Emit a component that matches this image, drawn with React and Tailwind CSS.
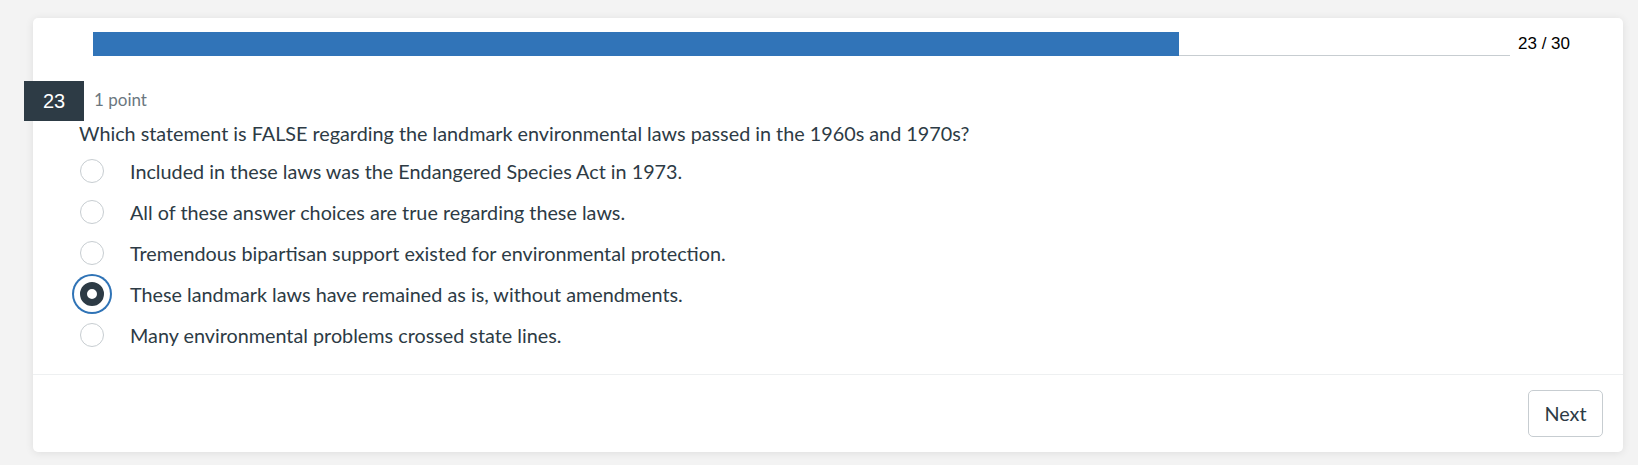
import React from "react"

const answers = [
  "Included in these laws was the Endangered Species Act in 1973.",
  "All of these answer choices are true regarding these laws.",
  "Tremendous bipartisan support existed for environmental protection.",
  "These landmark laws have remained as is, without amendments.",
  "Many environmental problems crossed state lines.",
]

const Radio = ({ checked }) =>
  checked ? (
    <span className="block w-6 h-6 shrink-0 rounded-full bg-white border-[7px] border-[#2d3b45] ring-2 ring-[#2f73b6] ring-offset-[6px] ring-offset-white" />
  ) : (
    <span className="block w-6 h-6 shrink-0 rounded-full bg-white border border-[#c7cdd1]" />
  )

const App = () => {
  const current = 23
  const total = 30
  const selected = 3

  return (
    <div className="w-full h-[465px] bg-[#f3f3f3] pt-[18px] font-['Lato',sans-serif] text-[#2d3b45]">
      <div className="ml-[33px] w-[1590px] h-[434px] bg-white rounded-[5px] shadow-[0_1px_8px_rgba(0,0,0,0.09)] flex flex-col">
        <div className="flex items-center pl-[60px] pt-[14px]">
          <div className="flex items-end w-[1417px] h-6">
            <div
              className="h-6 bg-[#3174b8] shrink-0"
              style={{ width: `${(current / total) * 100}%` }}
            />
            <div className="flex-1 h-px bg-[#c7cdd1]" />
          </div>
          <span className="ml-2 text-[17px] leading-6 text-black font-['Liberation_Sans',Arial,sans-serif]">
            {current} / {total}
          </span>
        </div>

        <div className="flex items-start mt-[25px] h-[37px] -ml-[9px]">
          <div className="w-[60px] h-10 shrink-0 flex items-center justify-center bg-[#2d3b45] text-white text-[20px] font-['Liberation_Sans',Arial,sans-serif]">
            {current}
          </div>
          <span className="ml-[10px] mt-[7px] text-[17px] leading-6 text-[#6b7780]">1 point</span>
        </div>

        <p className="pl-[46px] text-[19.8px] leading-[30px] mb-[2px]">
          Which statement is FALSE regarding the landmark environmental laws passed in the 1960s and 1970s?
        </p>

        <div className="flex flex-col pl-[47px]">
          {answers.map((a, i) => (
            <label key={i} className="flex items-center h-[41px] cursor-pointer">
              <Radio checked={i === selected} />
              <span className="ml-[26px] text-[19.8px] leading-[30px]">{a}</span>
            </label>
          ))}
        </div>

        <div className="mt-auto border-t border-[#eef0f1] flex justify-end pt-[15px] pb-[15px] pr-5">
          <button className="h-[47px] w-[75px] rounded-[5px] border border-[#c7cdd1] bg-white text-[19.8px] text-[#2d3b45]">
            Next
          </button>
        </div>
      </div>
    </div>
  )
}

export default App
